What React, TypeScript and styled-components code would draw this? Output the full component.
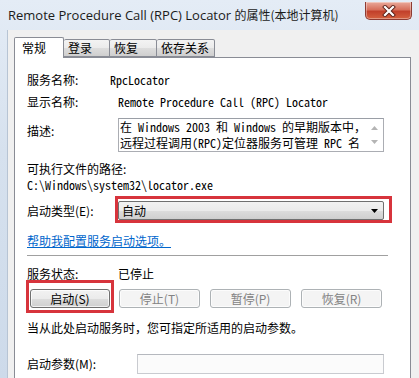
import styled, { createGlobalStyle } from "styled-components";

const cjk = `"Noto Sans CJK SC", "Noto Sans", sans-serif`;
const mono = `"Noto Sans Mono CJK SC", "Liberation Mono", "Noto Sans CJK SC", monospace`;

const GlobalStyle = createGlobalStyle`
  html, body {
    margin: 0;
    padding: 0;
    background: #fff;
  }
  body {
    font-family: ${cjk};
    font-size: 12px;
    color: #000;
  }
`;

const Window = styled.div`
  width: 419px;
  height: 378px;
  overflow: hidden;
  display: flex;
  flex-direction: column;
  background: linear-gradient(to bottom, #e4ecf6, #d6e1ee 40%, #cddaea);
`;

const TitleBar = styled.div`
  height: 30px;
  display: flex;
  align-items: flex-start;
  justify-content: space-between;
  flex-shrink: 0;
`;

const Title = styled.div`
  padding-left: 8px;
  line-height: 30px;
  font-family: "Open Sans", ${cjk};
  font-size: 13px;
  color: #1b1b1b;
  white-space: nowrap;
`;

const TitleCjk = styled.span`
  font-family: ${cjk};
  font-size: 12px;
`;

const CloseButton = styled.div`
  margin: 2px 7px 0 0;
  width: 47px;
  height: 18px;
  box-sizing: border-box;
  border: 1px solid #8d3b33;
  border-top: 0;
  border-radius: 0 0 5px 5px;
  background: linear-gradient(to bottom, #e9a99b, #d7705c 45%, #c2402b 55%, #d5613f);
  box-shadow: inset 0 0 0 1px rgba(255, 255, 255, 0.35);
  display: flex;
  align-items: center;
  justify-content: center;
`;

const Body = styled.div`
  flex: 1;
  display: flex;
  padding: 0 8px 0 8px;
  min-height: 0;
`;

const Client = styled.div`
  flex: 1;
  background: #f0f0f0;
  padding: 7px 8px 0 6px;
  display: flex;
  flex-direction: column;
  box-shadow: -1px 0 0 #b7c4d4, 1px 0 0 #9fb0c4;
`;

const Tabs = styled.div`
  display: flex;
  align-items: flex-end;
  height: 21px;
  position: relative;
  z-index: 1;
`;

const Tab = styled.div<{ $active?: boolean; $w: number }>`
  box-sizing: border-box;
  width: ${(p) => p.$w}px;
  height: ${(p) => (p.$active ? 21 : 18)}px;
  margin-bottom: ${(p) => (p.$active ? -1 : 0)}px;
  padding-left: ${(p) => (p.$active ? 7 : 4)}px;
  border: 1px solid #898c95;
  border-bottom: ${(p) => (p.$active ? "0" : "1px solid #898c95")};
  border-left-width: ${(p) => (p.$active ? 1 : 0)}px;
  border-radius: 2px 2px 0 0;
  background: ${(p) =>
    p.$active ? "#fff" : "linear-gradient(to bottom, #f3f3f3, #ebebeb 50%, #dddddd 51%, #cfcfcf)"};
  display: flex;
  align-items: center;
  font-size: 12px;
  line-height: 16px;
  color: #000;
`;

const Panel = styled.div`
  flex: 1;
  background: #fff;
  border: 1px solid #898c95;
  padding: 14px 18px 40px 12px;
  display: flex;
  flex-direction: column;
`;

const Row = styled.div<{ $mt?: number; $top?: boolean }>`
  display: flex;
  align-items: ${(p) => (p.$top ? "flex-start" : "center")};
  margin-top: ${(p) => p.$mt ?? 0}px;
  min-height: 16px;
`;

const Label = styled.div<{ $w?: number; $pt?: number }>`
  width: ${(p) => (p.$w ? `${p.$w}px` : "auto")};
  flex-shrink: 0;
  padding-top: ${(p) => p.$pt ?? 0}px;
  line-height: 16px;
  white-space: nowrap;
`;

const Mono = styled.span`
  font-family: ${mono};
  font-size: 12px;
  line-height: 16px;
  white-space: nowrap;
`;

const DescBox = styled.div`
  box-sizing: border-box;
  width: 266px;
  height: 34px;
  margin-top: -1px;
  border: 1px solid #abadb3;
  border-top-color: #9a9ea6;
  background: #fff;
  display: flex;
`;

const DescText = styled.div`
  flex: 1;
  padding: 0 0 0 1px;
  font-family: ${mono};
  font-size: 12px;
  line-height: 16px;
  overflow: hidden;
  white-space: nowrap;
`;

const ScrollCol = styled.div`
  width: 17px;
  display: flex;
  flex-direction: column;
  align-items: center;
  justify-content: space-between;
  padding: 7px 0 7px;
`;

const RedFrame = styled.div<{ $pad: string }>`
  border: 3px solid #d7343c;
  padding: ${(p) => p.$pad};
  display: flex;
  flex-shrink: 0;
`;

const Combo = styled.div`
  box-sizing: border-box;
  width: 266px;
  height: 19px;
  border: 1px solid #707070;
  border-radius: 2px;
  background: linear-gradient(to bottom, #f2f2f2, #ebebeb 50%, #dddddd 51%, #cfcfcf);
  display: flex;
  align-items: center;
  justify-content: space-between;
  padding: 0 5px 0 3px;
`;

const Link = styled.a`
  color: #0066cc;
  text-decoration: underline;
  line-height: 16px;
`;

const Separator = styled.div`
  height: 1px;
  margin: 6px 4px 0 0;
  background: #a0a0a0;
`;

const Button = styled.div<{ $disabled?: boolean }>`
  box-sizing: border-box;
  width: ${(p) => (p.$disabled ? 81 : 80)}px;
  height: 19px;
  border: 1px solid ${(p) => (p.$disabled ? "#adb2b5" : "#707070")};
  border-radius: 3px;
  background: ${(p) =>
    p.$disabled ? "#f4f4f4" : "linear-gradient(to bottom, #f2f2f2, #ebebeb 50%, #dddddd 51%, #cfcfcf)"};
  color: ${(p) => (p.$disabled ? "#838383" : "#000")};
  display: flex;
  align-items: center;
  justify-content: center;
  font-size: 12px;
  box-shadow: inset 0 0 0 1px rgba(255, 255, 255, 0.7);
`;

const ButtonGroup = styled.div`
  display: flex;
  gap: 10px;
  margin: 9px 0 0 5px;
`;

const Input = styled.div`
  box-sizing: border-box;
  width: 247px;
  height: 20px;
  border: 1px solid #c9cbd0;
  border-top-color: #b5b8be;
  background: #fbfbfb;
`;

function CloseX() {
  return (
    <svg width="14" height="12" viewBox="0 0 14 12">
      <path d="M3 2l8 8M11 2l-8 8" stroke="#5b2019" strokeWidth="4" strokeLinecap="square" />
      <path d="M3 2l8 8M11 2l-8 8" stroke="#fff" strokeWidth="2.2" strokeLinecap="square" />
    </svg>
  );
}

function Arrow({ up, color }: { up?: boolean; color: string }) {
  return (
    <svg width="7" height="4" viewBox="0 0 7 4">
      <path d={up ? "M0 4L3.5 0L7 4Z" : "M0 0L7 0L3.5 4Z"} fill={color} />
    </svg>
  );
}

export default function App() {
  return (
    <>
      <GlobalStyle />
      <Window>
        <TitleBar>
          <Title>
            Remote Procedure Call (RPC) Locator <TitleCjk>的属性(本地计算机)</TitleCjk>
          </Title>
          <CloseButton>
            <CloseX />
          </CloseButton>
        </TitleBar>
        <Body>
          <Client>
            <Tabs>
              <Tab $active $w={50}>常规</Tab>
              <Tab $w={46}>登录</Tab>
              <Tab $w={47}>恢复</Tab>
              <Tab $w={58}>依存关系</Tab>
            </Tabs>
            <Panel>
              <Row>
                <Label $w={83}>服务名称:</Label>
                <Mono>RpcLocator</Mono>
              </Row>
              <Row $mt={6}>
                <Label $w={91}>显示名称:</Label>
                <Mono>Remote Procedure Call (RPC) Locator</Mono>
              </Row>
              <Row $mt={9} $top>
                <Label $w={91} $pt={4}>描述:</Label>
                <DescBox>
                  <DescText>
                    在 Windows 2003 和 Windows 的早期版本中，
                    <br />
                    远程过程调用(RPC)定位器服务可管理 RPC 名
                  </DescText>
                  <ScrollCol>
                    <Arrow up color="#b4b4b4" />
                    <Arrow color="#b4b4b4" />
                  </ScrollCol>
                </DescBox>
              </Row>
              <Row $mt={9}>
                <Label>可执行文件的路径:</Label>
              </Row>
              <Row>
                <Mono>C:\Windows\system32\locator.exe</Mono>
              </Row>
              <Row $mt={3}>
                <Label $w={88} $pt={3}>启动类型(E):</Label>
                <RedFrame $pad="2px 5px 0 0">
                  <Combo>
                    <span>自动</span>
                    <Arrow color="#000" />
                  </Combo>
                </RedFrame>
              </Row>
              <Row $mt={10}>
                <Link>帮助我配置服务启动选项。</Link>
              </Row>
              <Separator />
              <Row $mt={10}>
                <Label $w={91}>服务状态:</Label>
                <Label>已停止</Label>
              </Row>
              <Row $mt={-2} $top>
                <RedFrame $pad="6px 1px 2px 1px" style={{ marginLeft: -1 }}>
                  <Button>启动(S)</Button>
                </RedFrame>
                <ButtonGroup>
                  <Button $disabled>停止(T)</Button>
                  <Button $disabled>暂停(P)</Button>
                  <Button $disabled>恢复(R)</Button>
                </ButtonGroup>
              </Row>
              <Row $mt={7}>
                <Label>当从此处启动服务时，您可指定所适用的启动参数。</Label>
              </Row>
              <Row $mt={18}>
                <Label $w={110}>启动参数(M):</Label>
                <Input />
              </Row>
            </Panel>
          </Client>
        </Body>
      </Window>
    </>
  );
}
